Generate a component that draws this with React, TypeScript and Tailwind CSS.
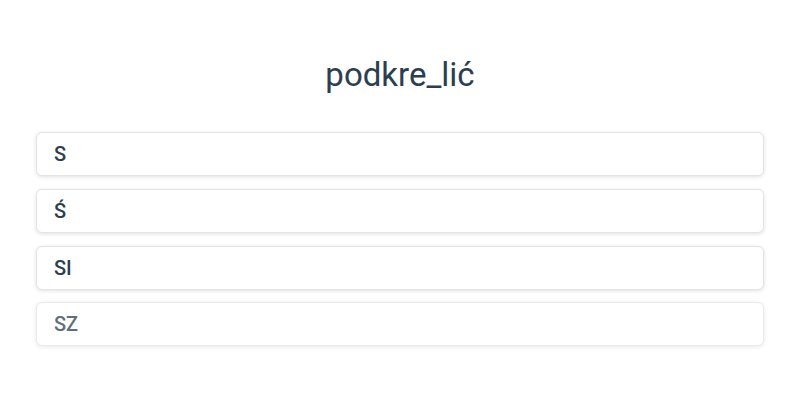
import React from "react";

const options = ["s", "ś", "si", "sz"];

export default function App() {
  return (
    <div className="w-[800px] h-[400px] bg-white text-[#2c3e50] font-['Roboto',sans-serif] px-[36px]">
      <h1 className="pt-[55px] text-center text-[33px] leading-[40px] font-normal">podkre_lić</h1>
      <div className="mt-[37px] flex flex-col gap-[12.8px]">
        {options.map((o, i) => (
          <div
            key={o}
            className={
              "h-[44px] flex items-center px-[17px] rounded-[6px] border border-[#e4e4e4] bg-white shadow-[0_1px_4px_rgba(0,0,0,0.12)] text-[20px] font-medium uppercase" +
              (i === 3 ? " opacity-75" : "")
            }
          >
            {o}
          </div>
        ))}
      </div>
    </div>
  );
}
